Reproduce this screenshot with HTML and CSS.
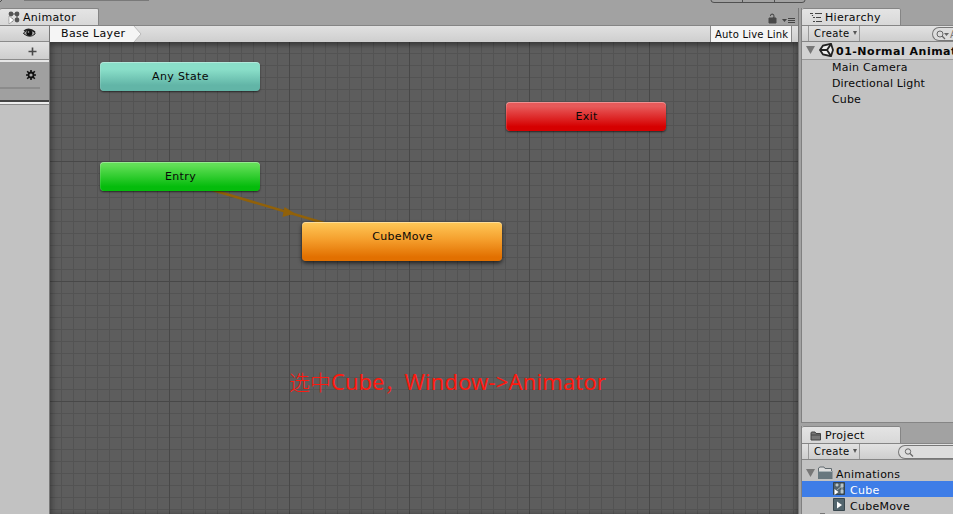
FILE: index.html
```html
<!DOCTYPE html>
<html lang="zh">
<head>
<meta charset="utf-8">
<title>Animator</title>
<link rel="stylesheet" href="styles.css">
</head>
<body>
<div class="editor">
  <svg class="top-controls" width="953" height="4">
    <path d="M0 2L2 0M24 0H149M711 0Q711 2.5 714 2.5H802Q805 2.5 805 0M742.5 0V2M774.5 0V2" fill="none" stroke="#505050"/>
  </svg>
  <main class="animator">
    <header class="tabs">
      <div class="tab tab-animator">
        <svg width="14" height="13"><g fill="#555"><circle cx="3" cy="3" r="2.4"/><circle cx="9" cy="3" r="2.4"/><circle cx="9" cy="9" r="2.4"/><circle cx="3" cy="9" r="2.2"/><path d="M3 2.5h6v1H3zM8.5 3h1v6h-1z"/></g><path d="M1 5l5 4-5 4z" fill="#fff" stroke="#777" stroke-width=".5"/></svg>
        <span>Animator</span>
      </div>
      <svg class="window-icons" width="30" height="12"><path d="M2 5h7v5H2zM7 5V3Q7 1 5.2 1T3.4 3" fill="#484848" stroke="#484848"/><path d="M3.8 4V3Q4 1.8 5.2 1.8T6.4 3v1z" fill="#a2a2a2"/><path d="M15 6h5l-2.5 3z" fill="#444"/><path d="M21 5.5h7M21 7.5h7M21 9.5h7" stroke="#444"/></svg>
    </header>
    <div class="workspace">
      <aside class="layers">
        <div class="side-row eye"><svg width="13" height="11"><path d="M.5 5Q6-1 12 4.5L12 6Q7 10.5 1 6z" fill="#aaa" stroke="#222"/><path d="M1 3Q6-1 12 4" fill="none" stroke="#222" stroke-width="1.6"/><circle cx="6.3" cy="5" r="3" fill="#111"/><circle cx="5.5" cy="4" r=".8" fill="#bbb"/></svg></div>
        <div class="side-row add"><svg width="9" height="9"><path d="M4.5 .5v8M.5 4.5h8" stroke="#484848" stroke-width="1.6"/></svg></div>
        <div class="layer"><svg width="10" height="10"><path d="M5 0v10M0 5h10M1.2 1.2l7.6 7.6M8.8 1.2L1.2 8.8" stroke="#111" stroke-width="1.6"/><circle cx="5" cy="5" r="2.5" fill="#aaa" stroke="#111" stroke-width="1.8"/></svg><i></i></div>
        <div class="divider"></div>
      </aside>
      <section class="graph-panel">
        <div class="breadcrumb">
          <div class="crumb"><svg width="92" height="16"><path d="M0 0H84L91 8L84 16H0z" fill="#f5f5f5"/><path d="M84 0L91 8L84 16" fill="none" stroke="#bbb"/></svg><span>Base Layer</span></div>
          <div class="live">Auto Live Link</div>
        </div>
        <div class="canvas">
          <svg class="link" width="748" height="472"><path d="M159 147L284 184" stroke="#916109" stroke-width="2.5"/><path d="M234.500 165L245 171.500L232.500 175z" fill="#916109"/></svg>
          <div class="node any">Any State</div>
          <div class="node exit">Exit</div>
          <div class="node entry">Entry</div>
          <div class="node move">CubeMove</div>
          <div class="note"><span class="zh">选中</span><span class="n1">Cube</span><span class="comma">，</span><span class="n2">Window-&gt;Animator</span></div>
        </div>
      </section>
    </div>
  </main>
  <aside class="right">
    <section class="hierarchy">
      <div class="tab tab-right"><svg width="13" height="11"><path d="M0 1.500h3M5 1.500h7M3 5.500h2M6 5.500h5M3 9.500h2M6 9.500h6M2.500 3v1" stroke="#444" stroke-width="1.2"/></svg><span class="t-hier">Hierarchy</span></div>
      <div class="toolbar"><div class="create"><span>Create</span><i></i></div>
        <div class="search search-a"><svg width="15" height="12"><circle cx="5" cy="5" r="3" fill="none" stroke="#666"/><path d="M7 7l3 3" stroke="#666" stroke-width="1.3"/><path d="M9 4h5l-2.500 3z" fill="#666"/></svg><span>A</span></div></div>
      <div class="scene"><svg width="30" height="14"><path d="M0 3h9l-4.500 8z" fill="#777"/><path d="M14 7L17 2.500L25 .8L27 7L25 13.200L17 11.500z" fill="#eee" stroke="#222" stroke-width="1.8"/><path d="M14 7h7M21 7L25 1M21 7L25 13" stroke="#222" stroke-width="1.9"/></svg><b>01-Normal Animat</b></div>
      <ul><li class="w-main">Main Camera</li><li class="w-dir">Directional Light</li><li>Cube</li></ul>
    </section>
    <section class="project">
      <div class="tab tab-right tab-project"><svg width="12" height="10"><path d="M1 2Q1 1 2 1H5L6 2.500H10.500V9H1z" fill="#777" stroke="#444"/><path d="M1 4h9.500" stroke="#444"/></svg><span>Project</span></div>
      <div class="toolbar"><div class="create"><span>Create</span><i></i></div>
        <div class="search search-b"><svg width="18" height="12"><circle cx="7" cy="4.500" r="2.700" fill="none" stroke="#666"/><path d="M9 6.500l3 3" stroke="#666" stroke-width="1.300"/></svg></div></div>
      <div class="files">
        <div class="file folder"><svg width="28" height="14"><path d="M0 3h9l-4.500 8z" fill="#777"/><path d="M12.500 12V2L14 1H18L19 2.500H25.500V12z" fill="#ddd" stroke="#626b70"/><path d="M12 5H26.500V13H12z" fill="#68777e"/><path d="M13 5.500h13" stroke="#a7b1b5"/></svg><span>Animations</span></div>
        <div class="file selected"><svg width="13" height="14"><path d="M.5 .5h11v12H.5z" fill="#53636d" stroke="#34434d"/><path d="M3 2h2v2H3zM8 2h2v3H8zM8 8h2v3H8zM4 8l5-4M9 5v4" fill="#b9c5c8" stroke="#b9c5c8" stroke-width=".8"/><path d="M1.500 7l4 3-4 3z" fill="#fff"/></svg><span>Cube</span></div>
        <div class="file"><svg width="13" height="14"><path d="M.5 .5h11v12H.5z" fill="#52656e" stroke="#39474e"/><path d="M4 3.500l5 3.500-5 3.500z" fill="#fff"/></svg><span>CubeMove</span></div>
        <div class="next"></div>
      </div>
    </section>
  </aside>
</div>
</body>
</html>
```
FILE: styles.css
```css
* { box-sizing: border-box; }
body { margin: 0; width: 953px; height: 514px; overflow: hidden; background: #a2a2a2; color: #080808; font: 11px/16px "DejaVu Sans", sans-serif; letter-spacing: .35px; white-space: nowrap; }
svg { display: block; flex: none; }
.editor { position: relative; display: grid; grid-template-columns: 799px 152px; gap: 2px; height: 514px; padding-top: 8px; }
.top-controls { position: absolute; top: 0; left: 0; }
.animator { display: flex; flex-direction: column; border-right: 1px solid #777; min-width: 0; }
.tabs { height: 17px; display: flex; justify-content: space-between; align-items: flex-end; padding-right: 1px; }
.tab { height: 17px; display: flex; align-items: center; border: 1px solid #858585; border-bottom: 0; border-radius: 2px 2px 0 0; background: linear-gradient(#e4e4e4, #d8d8d8); letter-spacing: .3px; }
.tab-animator { width: 99px; border-left: 0; padding: 1px 0 0 8px; gap: 1px; }
.workspace { flex: 1; display: grid; grid-template-columns: 50px 1fr; min-height: 0; }
.layers { background: #c2c2c2; border-right: 1px solid #777; border-top: 1px solid #858585; }
.side-row { height: 17px; background: linear-gradient(#e2e2e2, #cecece); border-bottom: 1px solid #8b8b8b; display: flex; align-items: center; }
.eye { padding-left: 23px; height: 16px; }
.add { height: 18px; padding: 2px 0 0 28px; }
.layer { height: 40px; background: #a0a0a0; border-top: 2px solid #e6e6e6; padding: 8px 0 0 26px; position: relative; }
.layer i { position: absolute; left: 0; top: 25px; width: 40px; height: 2px; background: #8b8b8b; }
.divider { height: 5px; background: #ededed; border-top: 2px solid #444; border-bottom: 1px solid #888; }
.graph-panel { display: flex; flex-direction: column; }
.breadcrumb { height: 17px; border-top: 1px solid #858585; display: flex; justify-content: space-between; background: linear-gradient(#e1e1e1, #cecece); padding-right: 6px; }
.crumb { width: 92px; position: relative; }
.crumb span { position: absolute; left: 11px; top: 0; }
.live { width: 82px; padding-left: 4px; line-height: 17px; font-size: 10px; letter-spacing: .2px; background: #f5f5f5; border: solid #888; border-width: 0 1px; }
.canvas { position: relative; flex: 1; box-shadow: inset 0 4px 4px #0004, inset 4px 0 4px #0002, inset -3px 0 4px #0002; background: repeating-linear-gradient(90deg, transparent 0 119px, #484848 119px 120px), repeating-linear-gradient(transparent 0 119px, #484848 119px 120px), repeating-linear-gradient(90deg, transparent 0 11px, #535353 11px 12px), repeating-linear-gradient(transparent 0 11px, #535353 11px 12px), #5d5d5d; }
.link { position: absolute; inset: 0; }
.node { position: absolute; width: 160px; height: 29px; line-height: 29px; padding-left: 1px; border-radius: 4px; text-align: center; box-shadow: inset 0 1px #fff5, inset 1px 0 #fff2, 0 1px 2px #0009; }
.any { left: 50px; top: 20px; background: linear-gradient(#8adfc9 25%, #62b5a7 80%); }
.exit { left: 456px; top: 60px; background: linear-gradient(#e75a5a 15%, #d60000 85%); }
.entry { left: 50px; top: 120px; background: linear-gradient(#62df57 10%, #05bc0c 85%); }
.move { left: 252px; top: 180px; width: 200px; height: 39px; background: linear-gradient(#ffc959, #f59f2d 45%, #e27000 90%); box-shadow: inset 0 1px #fff6, 0 2px 4px #000a; }
.note { position: absolute; left: 239px; top: 325px; display: flex; color: #ff190f; font: 22px/28px "Noto Sans", "Noto Sans CJK SC", sans-serif; letter-spacing: 0; }
.zh { font-size: 21px; }
.comma { width: 20px; }
.n2 { letter-spacing: .12px; }
.zh, .comma { font-family: "Noto Sans CJK SC", sans-serif; font-weight: 300; }
.right { display: flex; flex-direction: column; min-width: 0; overflow: hidden; }
.hierarchy { height: 415px; background: #c2c2c2; border-left: 1px solid #808080; border-bottom: 1px solid #858585; }
.tab-right { width: 99px; padding: 1px 0 0 8px; gap: 2px; border-left: 0; position: relative; }
.tab-right::after { content: ""; position: absolute; left: 99px; top: -1px; width: 60px; height: 17px; background: #a2a2a2; }
.toolbar { height: 17px; background: linear-gradient(#e2e2e2, #cecece); border-top: 1px solid #858585; border-bottom: 1px solid #858585; display: flex; justify-content: space-between; padding-left: 6px; }
.create { width: 52px; border: solid #999; border-width: 0 1px; display: flex; padding-left: 5px; gap: 3px; font-size: 10px; line-height: 16px; letter-spacing: .4px; }
.create i { width: 0; height: 0; border: 2.5px solid transparent; border-top: 4px solid #555; margin-top: 5px; }
.search { height: 14px; margin-top: 1px; border: 1px solid #777; border-right: 0; border-radius: 8px 0 0 8px; background: #ddd; display: flex; overflow: hidden; padding: 1px 0 0 2px; font-size: 10px; line-height: 12px; color: #777; }
.search-a { width: 21px; }
.search-b { width: 55px; }
.scene { height: 18px; border-bottom: 1px solid #999; background: #d2d2d2; padding: 1px 0 0 4px; display: flex; overflow: hidden; letter-spacing: .5px; line-height: 17px; }
ul { margin: 0; padding: 0 0 0 30px; list-style: none; letter-spacing: .15px; }
.w-main { letter-spacing: .25px; }
.project { margin-top: 3px; height: 88px; background: #c2c2c2; border-left: 1px solid #808080; }
.tab-project span { margin-left: 1px; }
.files { padding-top: 5px; }
.file { display: flex; height: 16px; gap: 4px; padding: 1px 0 0 31px; line-height: 17px; letter-spacing: .25px; }
.folder { padding-left: 4px; gap: 2px; }
.selected { background: #3e7de7; color: #fff; }
.next { margin-left: 18px; width: 5px; height: 1px; background: #777; }
```
